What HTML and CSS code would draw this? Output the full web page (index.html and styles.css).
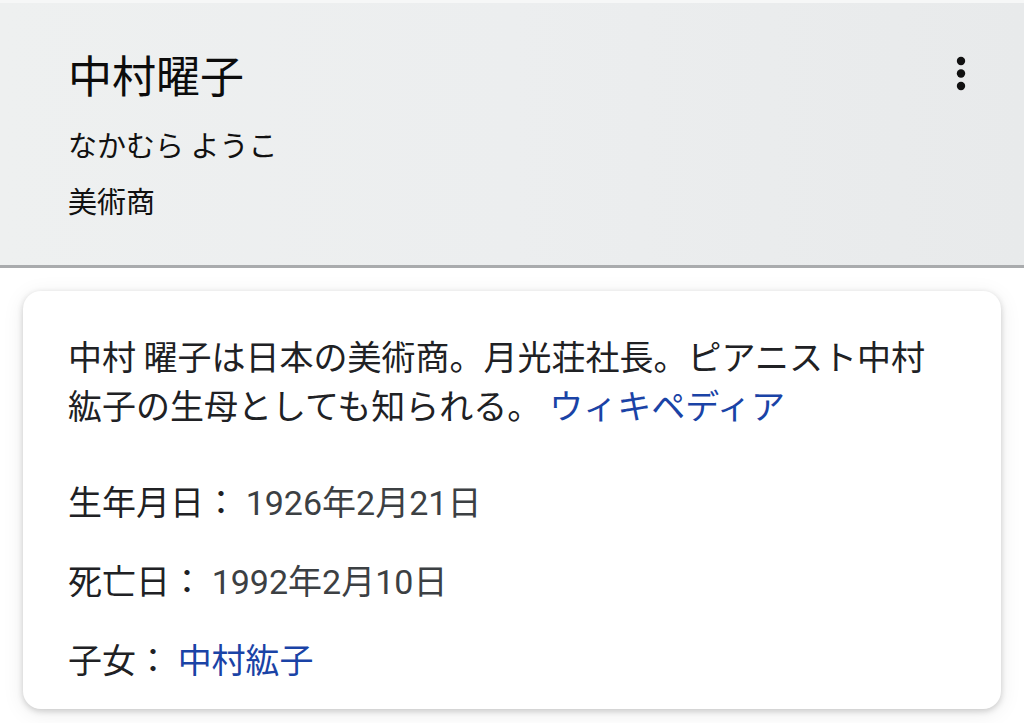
FILE: index.html
```html
<!DOCTYPE html>
<html lang="ja">
<head>
<meta charset="utf-8">
<link rel="stylesheet" href="styles.css">
</head>
<body>
<header class="header">
  <div class="header-text">
    <h1 class="title">中村曜子</h1>
    <div class="reading">なかむら ようこ</div>
    <div class="occupation">美術商</div>
  </div>
  <button class="menu" aria-label="メニュー">
    <svg width="12" height="36" viewBox="0 0 12 36"><circle cx="6" cy="5" r="4.2"/><circle cx="6" cy="17.5" r="4.2"/><circle cx="6" cy="30" r="4.2"/></svg>
  </button>
</header>
<main class="main">
  <section class="card">
    <p class="desc">中村 曜子は日本の美術商。月光荘社長。ピアニスト中村紘子の生母としても知られる。<a class="link source" href="#">ウィキペディア</a></p>
    <div class="row"><span class="label">生年月日：</span> <span class="value">1926年2月21日</span></div>
    <div class="row"><span class="label">死亡日：</span> <span class="value">1992年2月10日</span></div>
    <div class="row"><span class="label">子女：</span> <a class="link" href="#">中村紘子</a></div>
  </section>
</main>
</body>
</html>
```
FILE: styles.css
```css
html, body {
  margin: 0;
  padding: 0;
}
body {
  width: 1024px;
  height: 723px;
  overflow: hidden;
  background: #ffffff;
  font-family: "Noto Sans CJK JP", sans-serif;
  color: #202124;
}
.header {
  box-sizing: border-box;
  height: 268px;
  display: flex;
  justify-content: space-between;
  align-items: flex-start;
  padding: 47px 57px 0 68px;
  background: linear-gradient(90deg, #eef0f0 0%, #eceeef 50%, #e8eaeb 100%);
  border-top: 3px solid #f6f7f7;
  border-bottom: 3px solid #a9abad;
}
.header-text {
  display: flex;
  flex-direction: column;
  margin-top: -4px;
}
.title {
  margin: 0;
  font-size: 44px;
  font-weight: 400;
  line-height: 56px;
  color: #0c0c0c;
}
.reading {
  margin-top: 22px;
  font-size: 29px;
  line-height: 40px;
  color: #111;
}
.occupation {
  margin-top: 16px;
  font-size: 29px;
  line-height: 40px;
  color: #111;
}
.menu {
  border: none;
  background: none;
  padding: 0;
  margin-top: 6px;
  width: 12px;
  height: 36px;
  display: flex;
}
.menu svg {
  fill: #111;
}
.main {
  padding: 23px 23px 0 23px;
}
.card {
  box-sizing: border-box;
  height: 418px;
  background: #fff;
  border-radius: 18px;
  box-shadow: 0 2px 6px rgba(0, 0, 0, 0.18), 0 4px 22px rgba(0, 0, 0, 0.08);
  padding: 40px 45px 0 45px;
}
.desc {
  margin: 0 0 48px 0;
  font-size: 34px;
  line-height: 49px;
  color: #202124;
}
.link {
  display: inline-block;
  color: #1a43a6;
  text-decoration: none;
}
.source {
  margin-left: 8px;
}
.row {
  font-size: 34px;
  line-height: 48px;
  margin-bottom: 29px;
  color: #202124;
  white-space: nowrap;
}
.value {
  font-family: Roboto, "Noto Sans CJK JP", sans-serif;
  font-size: 34px;
  color: #3c4043;
}
```
